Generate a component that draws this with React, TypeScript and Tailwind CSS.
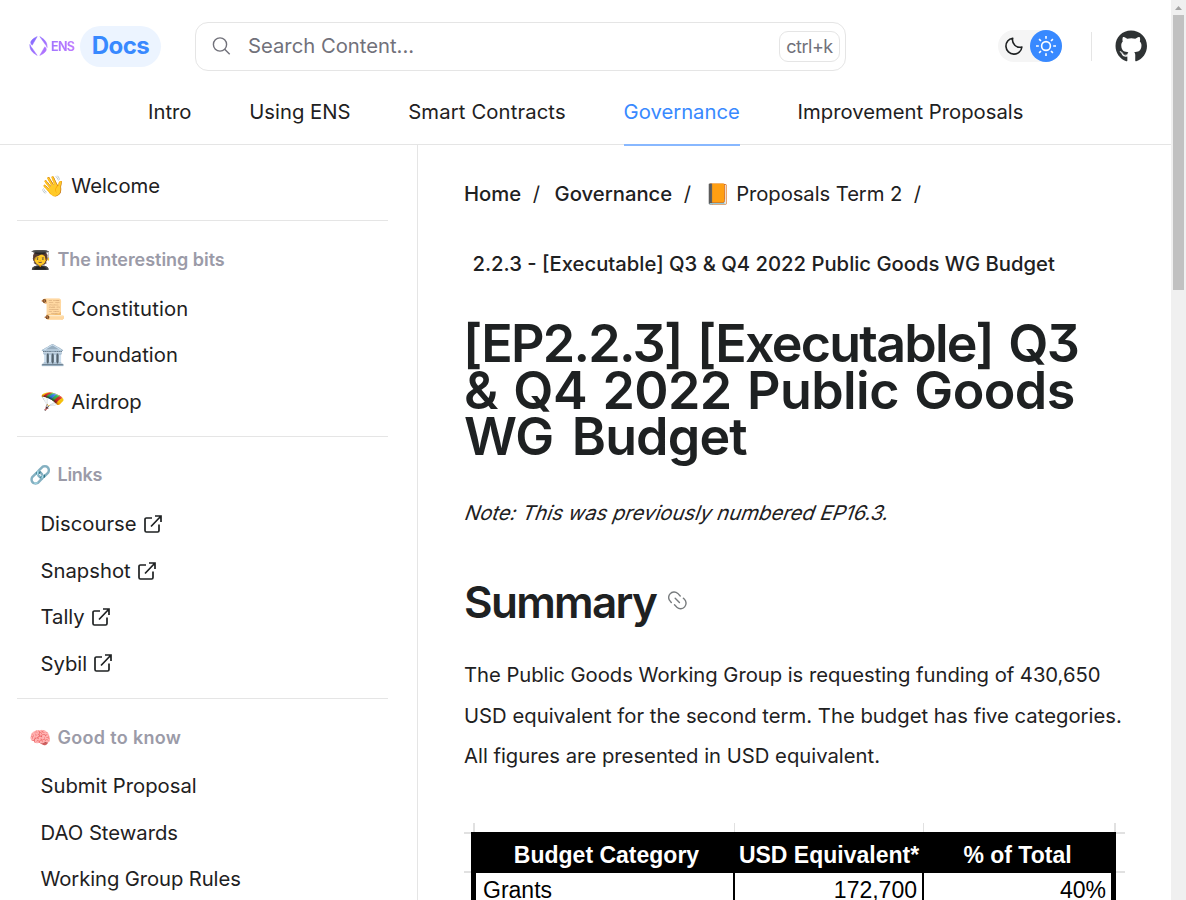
import type { ReactNode } from 'react'
import { FaGithub } from 'react-icons/fa'

const navItems = ['Intro', 'Using ENS', 'Smart Contracts', 'Governance', 'Improvement Proposals']

type Item = { label: string; emoji?: string; external?: boolean; tracking?: string }

const sections: { emoji: string; title: string; tracking: string; items: Item[] }[] = [
  {
    emoji: '🧑‍🎓',
    title: 'The interesting bits',
    tracking: 'tracking-[-0.03px]',
    items: [
      { emoji: '📜', label: 'Constitution', tracking: 'tracking-[0.15px]' },
      { emoji: '🏛️', label: 'Foundation' },
      { emoji: '🪂', label: 'Airdrop' },
    ],
  },
  {
    emoji: '🔗',
    title: 'Links',
    tracking: 'tracking-[-0.3px]',
    items: [
      { label: 'Discourse', external: true },
      { label: 'Snapshot', external: true },
      { label: 'Tally', external: true },
      { label: 'Sybil', external: true },
    ],
  },
  {
    emoji: '🧠',
    title: 'Good to know',
    tracking: 'tracking-[0.32px]',
    items: [
      { label: 'Submit Proposal' },
      { label: 'DAO Stewards' },
      { label: 'Working Group Rules', tracking: 'tracking-[-0.1px]' },
    ],
  },
]

function EnsLogo() {
  return (
    <svg width="19" height="20" viewBox="0 0 19 20" className="ml-[0.500px] block">
      <defs>
        <linearGradient id="ens" x1="0" y1="0" x2="1" y2="1">
          <stop offset="0" stopColor="#7f6bff" />
          <stop offset="1" stopColor="#b975ff" />
        </linearGradient>
      </defs>
      <path
        fill="url(#ens)"
        stroke="url(#ens)"
        strokeWidth="0.500"
        strokeLinejoin="round"
        d="M8.2.6 3.2 9.2C1.800 8 1.3 6.7 2 5.3 3.200 3.300 5.500 1.800 8.200.6ZM.9 8.400C.6 13.500 3 16.300 8.200 19.400L3 12C1.900 10.700 1.200 9.600 .9 8.400ZM10.800.6l5.200 7.400c1.100 1.300 1.800 2.400 2.100 3.600.3-5.100-2.100-7.900-7.300-11ZM10.800 19.400l5-8.600c1.400 1.200 1.900 2.500 1.200 3.900-1.200 2-3.500 3.500-6.200 4.700Z"
      />
    </svg>
  )
}

function ExternalIcon() {
  return (
    <svg width="18" height="18" viewBox="0 0 18 18" fill="none" stroke="currentColor" strokeWidth="1.700" className="mt-[-1px] ml-[7px] block">
      <path d="M8 3H2.400A1.400 1.400 0 0 0 1 4.400v11.200A1.400 1.400 0 0 0 2.400 17h11.200a1.400 1.400 0 0 0 1.400-1.400V9.500M11 1h6v6M17 1 7 11.500" />
    </svg>
  )
}

function Moon() {
  return (
    <svg width="20" height="20" viewBox="0 0 20 20" fill="none" stroke="#1e2122" strokeWidth="1.600" strokeLinejoin="round">
      <path d="M8.700 2.200A8 8 0 1 0 17.900 11 7.400 7.400 0 0 1 8.700 2.200Z" />
    </svg>
  )
}

function Sun() {
  return (
    <svg width="20" height="20" viewBox="0 0 20 20" fill="none" stroke="#fff" strokeWidth="1.600">
      <circle cx="10" cy="10" r="4.400" />
      <path d="M10 0v2.800M10 17.200V20M0 10h2.800M17.200 10H20M3.100 3.100l1.900 1.900M15 15l1.900 1.900M3.100 16.900 5 15M15 5l1.900-1.900" />
    </svg>
  )
}

function Header() {
  return (
    <header className="h-[145px] border-b border-[#e5e5e5]">
      <div className="flex h-[92px] items-center pl-[28px]">
        <EnsLogo />
        <span className="mt-[2px] ml-[3.500px] w-[24px] bg-gradient-to-r from-[#a276ff] to-[#bf7bff] bg-clip-text text-[12.500px] font-bold tracking-[-0.700px] text-transparent">
          ENS
        </span>
        <span className="ml-[5px] flex h-[41px] w-[81px] items-center justify-center rounded-full bg-[#ecf4ff] text-[24px] font-bold tracking-[-0.500px] text-[#3889ff]">
          Docs
        </span>
        <div className="ml-[34px] flex h-[49px] w-[651px] items-center rounded-[13px] border border-[#e5e5e5] pr-[5px] pl-[16px]">
          <svg width="19" height="19" viewBox="0 0 19 19" fill="none" stroke="#71717a" strokeWidth="1.400">
            <circle cx="8" cy="7.500" r="6.600" />
            <path d="m12.700 12.200 5 5" />
          </svg>
          <span className="ml-[17px] flex-1 text-[#71717a]">Search Content...</span>
          <span className="flex h-[31px] w-[61px] items-center justify-center rounded-[9px] border border-[#e5e5e5] text-[18px] tracking-[-0.500px] text-[#71717a]">
            ctrl+k
          </span>
        </div>
        <div className="ml-[152px] flex h-8 w-16 items-center rounded-full bg-[#f5f5f5]">
          <div className="flex flex-1 justify-center">
            <Moon />
          </div>
          <div className="flex size-8 items-center justify-center rounded-full bg-[#3889ff]">
            <Sun />
          </div>
        </div>
        <div className="ml-[29px] h-[29px] w-px bg-[#e5e5e5]" />
        <FaGithub className="ml-[23px] text-[32.500px] text-[#2f3334]" />
      </div>
      <nav className="flex h-[54px] gap-[57.800px] pl-[148px]">
        {navItems.map((n) => (
          <a
            key={n}
            className={
              n === 'Governance'
                ? 'h-[54px] border-b-2 border-[#88b8ff] pt-[7px] leading-[26px] text-[#3889ff]'
                : n === 'Smart Contracts'
                  ? 'pt-[7px] leading-[26px] tracking-[0.130px]'
                  : 'pt-[7px] leading-[26px]'
            }
          >
            {n}
          </a>
        ))}
      </nav>
    </header>
  )
}

function SideItem({ item }: { item: Item }) {
  return (
    <a className="flex h-[46.400px] items-center pl-[23.500px]">
      {item.emoji && <span className="mr-[5.500px] text-[20.250px]">{item.emoji}</span>}
      <span className={item.tracking}>{item.label}</span>
      {item.external && <ExternalIcon />}
    </a>
  )
}

function Sidebar() {
  return (
    <aside className="w-[418px] shrink-0 border-r border-[#e5e5e5] pr-[29px] pl-[17px]">
      <div className="pt-[18px] pb-[11px]">
        <SideItem item={{ emoji: '👋', label: 'Welcome' }} />
      </div>
      {sections.map((s) => (
        <section key={s.title} className="border-t border-[#e5e5e5] pb-[11.100px]">
          <h3 className="flex h-[64.400px] items-center pt-[11.500px] pl-[13px] text-[18px] font-semibold text-[#9b9ba8]">
            <span className="mr-[5px] -ml-[0.500px] w-[23px]">{s.emoji}</span>
            <span className={s.tracking}>{s.title}</span>
          </h3>
          {s.items.map((i) => (
            <SideItem key={i.label} item={i} />
          ))}
        </section>
      ))}
    </aside>
  )
}

function Slash() {
  return <span className="mr-[14.500px] ml-[11.500px] font-normal">/</span>
}

function Cell({ className, children }: { className: string; children: ReactNode }) {
  return <div className={className}>{children}</div>
}

function BudgetTable() {
  return (
    <div className="mt-[46.500px] w-[661px] font-['Liberation_Sans',Arial,sans-serif]">
      <div className="ml-[9px] flex h-[9px] w-[643px] border-x-2 border-[#e1e1e1]">
        <div className="w-[260px] border-r border-[#e1e1e1]" />
        <div className="w-[189px] border-r border-[#e1e1e1]" />
      </div>
      <div className="flex">
        <div className="h-[41px] w-[7px] border-y-2 border-[#e1e1e1]" />
        <div className="flex h-[41px] w-[645px] items-center bg-black pt-[5px] text-[23px] font-bold text-white">
          <Cell className="w-[263px] pl-[8px] text-center">Budget Category</Cell>
          <Cell className="w-[190px] text-center whitespace-nowrap">USD Equivalent*</Cell>
          <Cell className="w-[187px] text-center">% of Total</Cell>
        </div>
        <div className="h-[41px] w-[9px] border-y-2 border-[#e1e1e1]" />
      </div>
      <div className="ml-[7px] flex h-[41px] w-[645px] items-center border-x-5 border-black text-[23px] text-black">
        <Cell className="h-full w-[259px] border-r-2 border-black pl-[7px]">Grants</Cell>
        <Cell className="h-full w-[189px] border-r-2 border-black pr-[5px] text-right">172,700</Cell>
        <Cell className="h-full flex-1 pr-[5px] text-right">40%</Cell>
      </div>
    </div>
  )
}

function Article() {
  return (
    <main className="min-w-0 flex-1 pl-[46px]">
      <div className="flex h-[98px] items-center font-medium">
        Home
        <Slash />
        Governance
        <Slash />
        <span className="flex items-center font-normal tracking-[-0.070px]">
          <span className="mr-[5.500px]">📙</span>Proposals Term 2
        </span>
        <Slash />
      </div>
      <div className="flex h-[42px] items-center pl-[8.500px] font-medium">
        2.2.3 - [Executable] Q3 &amp; Q4 2022 Public Goods WG Budget
      </div>
      <h1 className="mt-[36px] text-[52px] leading-[46.700px] font-semibold whitespace-nowrap [font-feature-settings:'cv09']">
        <span className="-ml-px block tracking-[-1.750px] [word-spacing:4px]">[EP2.2.3] [Executable] Q3</span>
        <span className="block tracking-[-0.600px] [word-spacing:3px]">&amp; Q4 2022 Public Goods</span>
        <span className="block tracking-[-0.850px] [word-spacing:6px]">WG Budget</span>
      </h1>
      <p className="mt-[32px] leading-[40.500px]">
        <em className="-ml-px inline-block origin-[0_68%] -skew-x-[20deg] tracking-[0.010px] whitespace-nowrap not-italic">
          Note: This was previously numbered EP16.3.
        </em>
      </p>
      <h2 className="mt-[40px] flex h-[56px] items-center text-[44px] font-semibold tracking-[-1.700px]">
        Summary
        <svg width="19" height="19" viewBox="0 0 19 19" fill="none" stroke="#777b7d" strokeWidth="1.400" strokeLinecap="round" className="mt-[-3px] ml-[12px]">
          <path d="M3.300 11.500 2.500 10.600A5.100 5.100 0 0 1 9.800 2.400L12.200 5M15.400 7.200l.8.900A5.100 5.100 0 0 1 8.900 16.300L6.500 13.700M7.200 7.200l4.200 4.200" />
        </svg>
      </h2>
      <p className="mt-[25.500px] leading-[40.500px] whitespace-nowrap">
        <span className="tracking-[-0.035px]">The Public Goods Working Group is requesting funding of 430,650</span>
        <br />
        <span className="tracking-[0.015px]">USD equivalent for the second term. The budget has five categories.</span>
        <br />
        All figures are presented in USD equivalent.
      </p>
      <BudgetTable />
    </main>
  )
}

export default function App() {
  return (
    <div className="flex h-screen overflow-hidden bg-white font-['Inter','Noto_Color_Emoji',sans-serif] text-[20.250px] text-[#1e2122]">
      <div className="w-[1171px]">
        <Header />
        <div className="flex h-[755px] overflow-hidden">
          <Sidebar />
          <Article />
        </div>
      </div>
      <div className="flex w-[15px] flex-col items-center bg-[#f0f0f0]">
        <svg width="15" height="15" viewBox="0 0 15 15" className="block">
          <path d="M4 10h7L7.500 6Z" fill="#a3a3a3" />
        </svg>
        <div className="h-[275px] w-[11px] bg-[#c1c1c1]" />
      </div>
    </div>
  )
}
